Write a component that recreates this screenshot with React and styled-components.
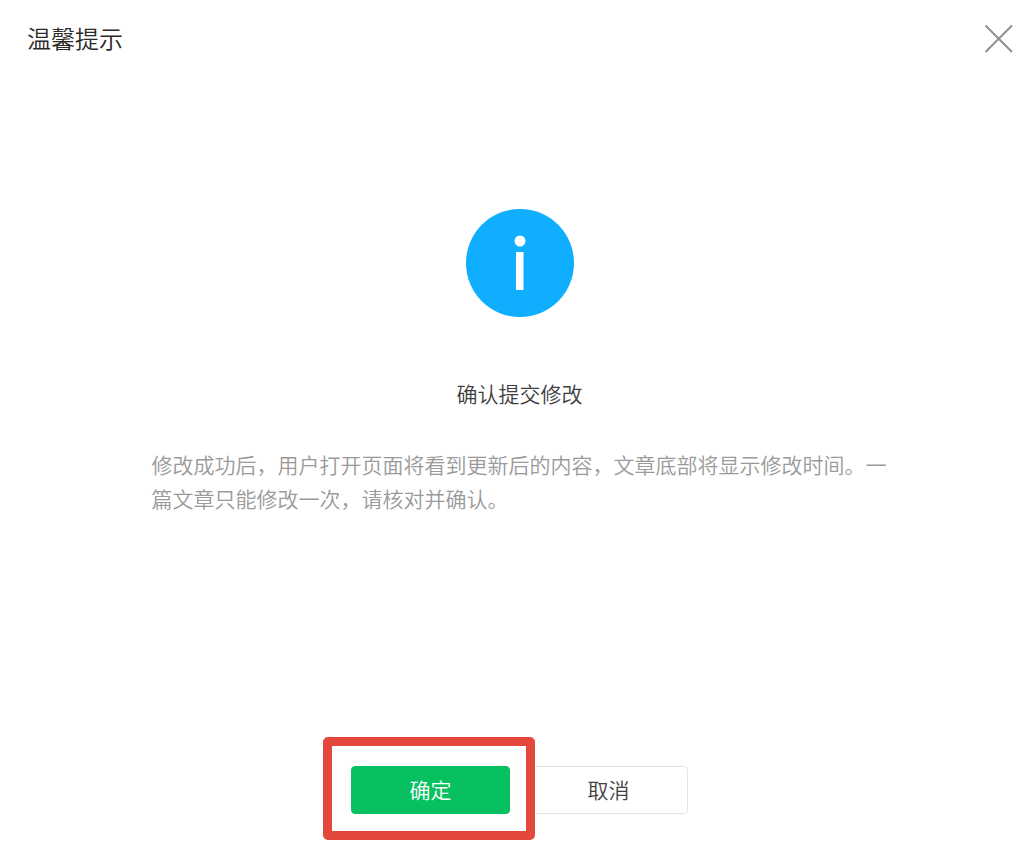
import React from 'react';
import styled, { createGlobalStyle, css } from 'styled-components';

const GlobalStyle = createGlobalStyle`
  *, *::before, *::after { box-sizing: border-box; }
  body {
    margin: 0;
    background: #fff;
    color: #404040;
    font-family: "Noto Sans CJK SC", "Noto Sans", sans-serif;
    font-size: 21px;
    font-weight: 350;
    line-height: 34px;
  }
`;

const Dialog = styled.section`
  display: flex;
  flex-direction: column;
  min-height: 100vh;
`;

const Header = styled.header`
  display: flex;
  align-items: center;
  justify-content: space-between;
  height: 77px;
  padding: 0 22px 0 27px;
`;

const Title = styled.h1`
  margin: 0;
  padding-bottom: 2px;
  color: #2a2a2a;
  font-size: 24px;
  font-weight: 350;
  line-height: 34px;
`;

const CloseButton = styled.button`
  display: flex;
  padding: 0;
  border: 0;
  background: none;
  color: #8f8f8f;
  cursor: pointer;
`;

const Body = styled.main`
  display: flex;
  flex: 1;
  flex-direction: column;
  align-items: center;
  padding: 132px 24px 48px 27px;
`;

const InfoIcon = styled.svg`
  display: block;
  width: 108px;
  height: 108px;
  flex: none;
`;

const Heading = styled.h2`
  margin: 59px 0 37px;
  font-size: 21px;
  font-weight: 350;
  line-height: 34px;
`;

const Description = styled.p`
  width: 100%;
  max-width: 736px;
  margin: 0;
  color: #9a9a9a;
`;

const Footer = styled.footer`
  display: flex;
  justify-content: center;
  gap: 19px;
  padding: 0 24px 30px 27px;
`;

const Highlight = styled.div`
  position: relative;

  &::after {
    content: "";
    position: absolute;
    inset: -29px -25px -26px -28px;
    border: 9px solid #e4473c;
    border-radius: 5px;
    pointer-events: none;
  }
`;

const Button = styled.button`
  width: 159px;
  height: 48px;
  padding: 0 0 2px;
  border: 1px solid #e4e4e4;
  border-radius: 4px;
  background: #fff;
  color: #404040;
  font: inherit;
  cursor: pointer;

  ${({ $primary }) => $primary && css`
    border-color: #07c160;
    background: #07c160;
    color: #fff;
  `}
`;

export default function App() {
  return (
    <>
      <GlobalStyle />
      <Dialog role="dialog" aria-labelledby="dialog-title">
        <Header>
          <Title id="dialog-title">温馨提示</Title>
          <CloseButton type="button" aria-label="关闭">
            <svg width="30" height="30" viewBox="0 0 30 30" fill="none" stroke="currentColor" strokeWidth="2">
              <path d="M1.5 1.5 28 28M28 1.5 1.5 28" />
            </svg>
          </CloseButton>
        </Header>
        <Body>
          <InfoIcon viewBox="0 0 108 108" aria-hidden="true">
            <circle cx="54" cy="54" r="54" fill="#10aeff" />
            <circle cx="54" cy="32" r="5.5" fill="#fff" />
            <rect x="50" y="43" width="7.5" height="38" fill="#fff" />
          </InfoIcon>
          <Heading>确认提交修改</Heading>
          <Description>
            修改成功后，用户打开页面将看到更新后的内容，文章底部将显示修改时间。一篇文章只能修改一次，请核对并确认。
          </Description>
        </Body>
        <Footer>
          <Highlight>
            <Button type="button" $primary>确定</Button>
          </Highlight>
          <Button type="button">取消</Button>
        </Footer>
      </Dialog>
    </>
  );
}
